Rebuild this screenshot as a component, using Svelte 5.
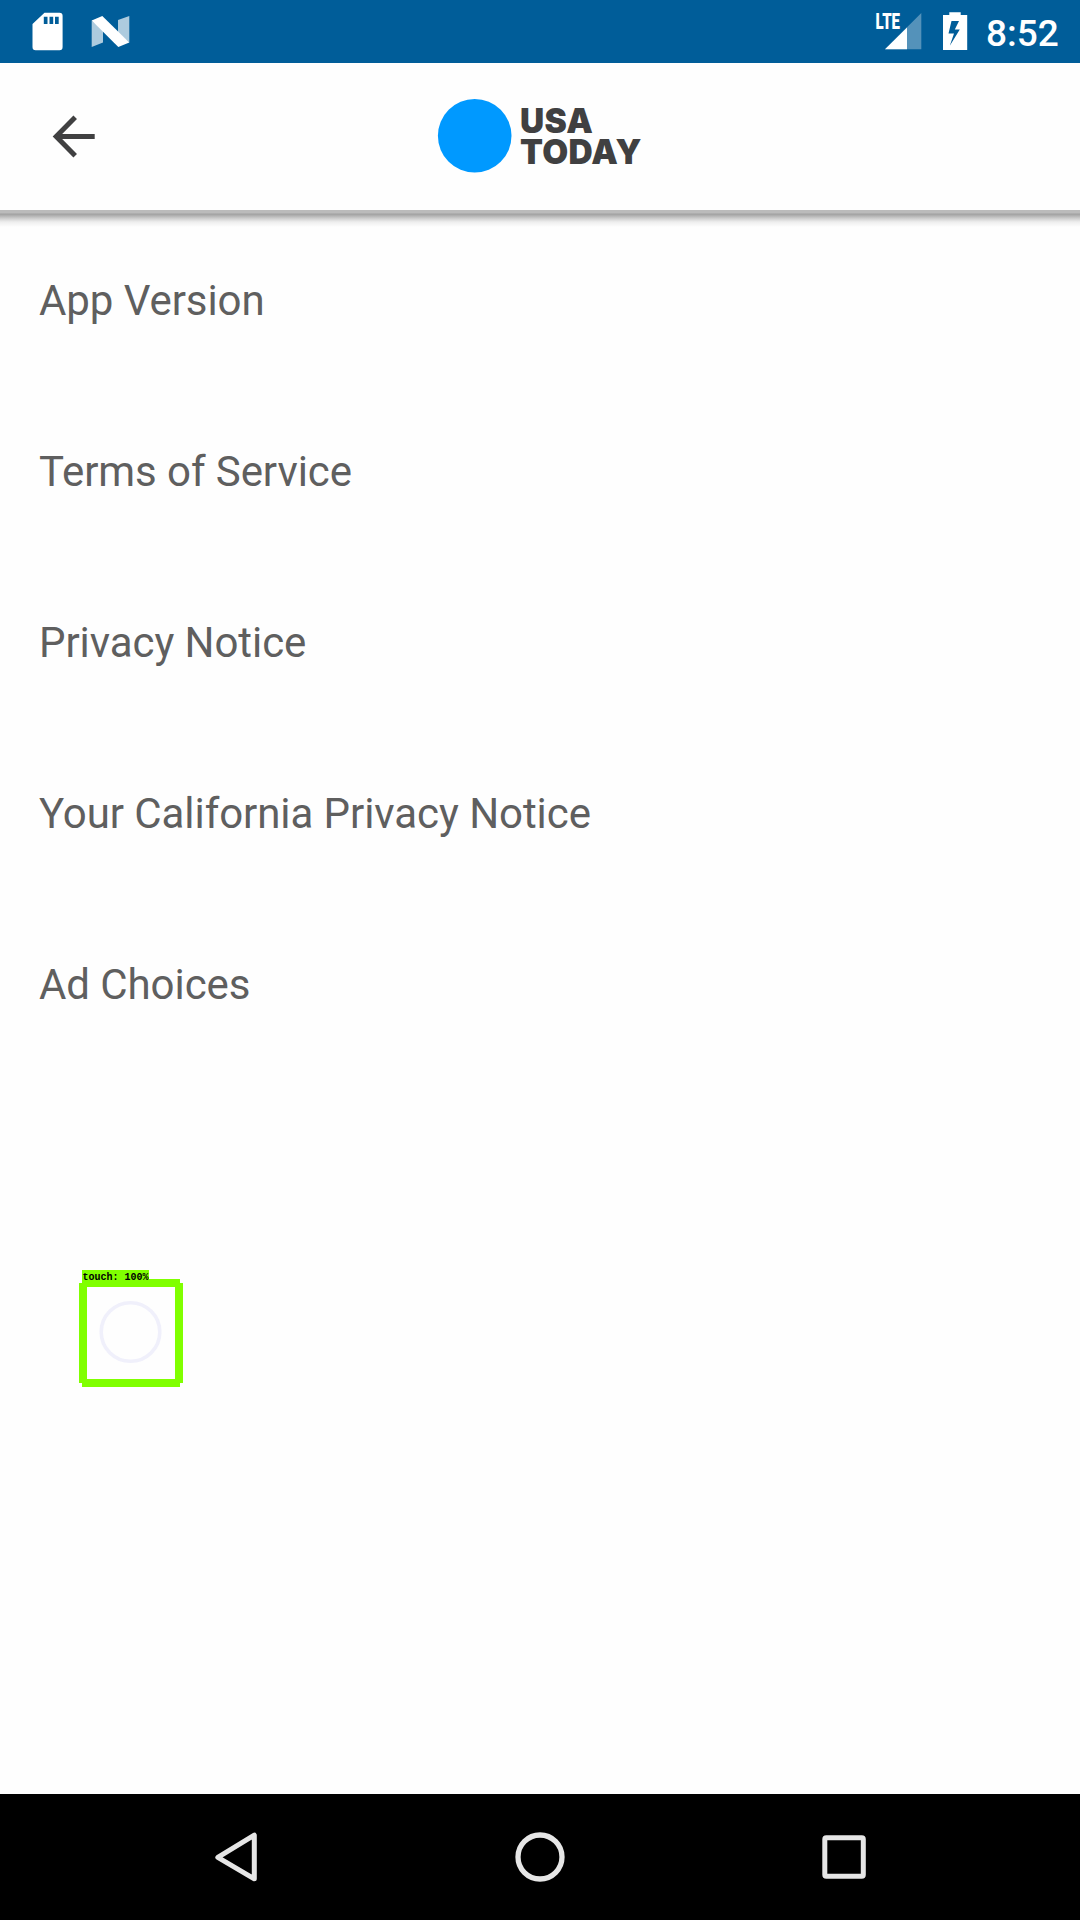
<script>
  const items = [
    'App Version',
    'Terms of Service',
    'Privacy Notice',
    'Your California Privacy Notice',
    'Ad Choices'
  ];
</script>

<div class="screen">
  <div class="status">
    <svg class="sd" width="32" height="40" viewBox="31 12 32 40">
      <path fill="#fff" fill-rule="evenodd" d="M44.5 12.700H59.500Q62.600 12.700 62.600 15.800V47Q62.600 50.200 59.500 50.200H35.700Q32.500 50.200 32.500 47V24ZM43.800 16.700V24H47.500V16.700ZM49.500 16.700V24H53.200V16.700ZM55 16.700V24H58.700V16.700Z" />
    </svg>
    <svg class="nougat" width="40" height="36" viewBox="90 14 40 36">
      <path fill="#fff" fill-opacity=".68" d="M91.700 20.500L103 30V42.500L91.700 47ZM118 20L129.300 16V42.500L118 33Z" />
      <path fill="#fff" d="M91.700 20.500L102.300 16L129.300 42.500L118.300 47Z" />
    </svg>
    <div class="grow"></div>
    <svg class="signal" width="48" height="40" viewBox="875 12 48 40">
      <path fill="#fff" fill-opacity=".33" d="M921.300 13V49.300H885Z" />
      <path fill="#fff" d="M907 27.500V49.300H885Z" />
      <path fill="#005d99" d="M875 12H901V30H875Z" />
      <text class="lte" x="875.500" y="29" textLength="24.500" lengthAdjust="spacingAndGlyphs">LTE</text>
    </svg>
    <svg class="battery" width="26" height="40" viewBox="942 11 26 40">
      <path fill="#fff" fill-rule="evenodd" d="M949.300 12.300H960.700V15H967.200V50H943V15H949.300ZM951.500 21L948.500 33.500H954L949.800 45.700L959.800 29.500H954.800L959 21Z" />
    </svg>
    <span class="clock">8:52</span>
  </div>

  <header>
    <svg width="44" height="44" viewBox="52 114 44 44">
      <path fill="none" stroke="#404041" stroke-width="5" d="M94.700 136.500H56M75.200 117.300L56.200 136.500L75.200 155.700" />
    </svg>
    <svg class="mark" width="76" height="80" viewBox="436 96 76 80">
      <circle cx="474.700" cy="135.800" r="36.800" fill="#09f" />
    </svg>
    <div class="name">
      <span>USA</span>
      <span>TODAY</span>
    </div>
  </header>
  <div class="shadow"></div>

  <main>
    {#each items as item}
      <div class="item">{item}</div>
    {/each}
  </main>

  <nav>
    <svg width="44" height="52" viewBox="214 1831 44 52">
      <path fill="none" stroke="#e6e6e6" stroke-width="5" stroke-linejoin="round" d="M254.300 1835.200V1878.800L217.800 1857.400Z" />
    </svg>
    <svg width="52" height="52" viewBox="514 1831 52 52">
      <circle cx="540" cy="1857" r="22" fill="none" stroke="#e6e6e6" stroke-width="5.300" />
    </svg>
    <svg width="44" height="52" viewBox="822 1831 44 52">
      <rect x="824.800" y="1837.800" width="38.500" height="38.500" rx="1.500" fill="none" stroke="#e6e6e6" stroke-width="5" />
    </svg>
  </nav>

  <svg class="touch" width="106" height="120" viewBox="78 1269 106 120">
    <path fill="#80ff00" d="M82 1270H149V1279H180V1283H183V1383H180V1387H82V1383H79V1283H82Z" />
    <path fill="#fefefe" d="M87 1287H175V1379H87Z" />
    <circle cx="130.500" cy="1332" r="29.300" fill="#fefefe" stroke="#f0f0fb" stroke-width="3.600" />
    <text x="82.500" y="1279.500">touch: 100%</text>
  </svg>
</div>

<style>
  :global(body) {
    margin: 0;
    background: #fefefe;
  }
  .screen {
    position: relative;
    width: 1080px;
    height: 1920px;
    display: flex;
    flex-direction: column;
    background: #fefefe;
    font-family: Roboto, 'Liberation Sans', sans-serif;
    overflow: hidden;
  }
  svg {
    display: block;
    flex: none;
  }
  .status {
    height: 63px;
    display: flex;
    align-items: flex-start;
    padding: 0 21px 0 31px;
    box-sizing: border-box;
    background: #005d99;
    color: #fff;
  }
  .sd {
    margin-top: 12px;
  }
  .nougat {
    margin: 14px 0 0 27px;
  }
  .grow {
    flex: 1;
  }
  .signal {
    margin-top: 12px;
    overflow: visible;
  }
  .lte {
    font: 900 22px Roboto, sans-serif;
    fill: #fff;
  }
  .battery {
    margin: 11px 0 0 19px;
  }
  .clock {
    width: 73px;
    margin-left: 18px;
    font-size: 37px;
    font-weight: 500;
    line-height: 67px;
    white-space: nowrap;
  }
  header {
    height: 147px;
    display: flex;
    align-items: center;
    padding: 0 0 1px 52px;
    box-sizing: border-box;
  }
  .mark {
    margin-left: 340px;
  }
  .name {
    display: flex;
    flex-direction: column;
    padding-top: 2px;
    margin-left: 8px;
    font: 900 33.500px/31px Inter, sans-serif;
    letter-spacing: 0.300px;
    color: #404041;
  }
  .shadow {
    height: 17px;
    margin-bottom: -12px;
    background: linear-gradient(#bbb 0 3px, #a0a0a0 4px, #b4b4b4 6px, #d4d4d4 9px, #eee 12px, #fefefe 17px);
  }
  main {
    flex: 1;
  }
  .item {
    height: 171px;
    line-height: 171px;
    padding-left: 39px;
    font-size: 42px;
    letter-spacing: -0.070px;
    color: #5f5f5f;
  }
  nav {
    height: 126px;
    display: flex;
    align-items: center;
    justify-content: space-between;
    padding: 0 214px;
    box-sizing: border-box;
    background: #000;
  }
  .touch {
    position: absolute;
    left: 78px;
    top: 1269px;
  }
  .touch text {
    font: 700 10px 'Liberation Mono', monospace;
    fill: #000;
    white-space: pre;
  }
</style>
